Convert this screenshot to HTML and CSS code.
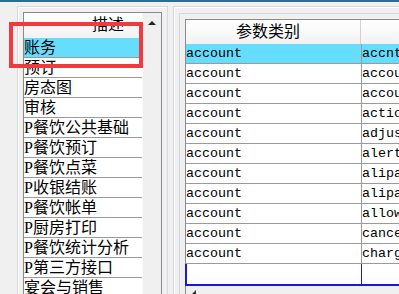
FILE: index.html
```html
<!DOCTYPE html>
<html>
<head>
<meta charset="utf-8">
<link rel="stylesheet" href="styles.css">
</head>
<body>
<div class="topbar"></div>
<div class="main">
  <div class="left-frame">
    <div class="left-grid">
      <div class="list">
        <div class="hdr">描述</div>
        <div class="row sel">账务</div>
        <div class="row">预订</div>
        <div class="row">房态图</div>
        <div class="row">审核</div>
        <div class="row">P餐饮公共基础</div>
        <div class="row">P餐饮预订</div>
        <div class="row">P餐饮点菜</div>
        <div class="row">P收银结账</div>
        <div class="row">P餐饮帐单</div>
        <div class="row">P厨房打印</div>
        <div class="row">P餐饮统计分析</div>
        <div class="row">P第三方接口</div>
        <div class="row">宴会与销售</div>
      </div>
      <div class="vscroll"><span class="up"></span></div>
    </div>
  </div>
  <div class="right-frame">
    <div class="right-inner">
      <div class="table">
        <div class="trow thead"><div class="c1">参数类别</div><div class="c2"></div></div>
        <div class="trow sel"><div class="c1">account</div><div class="c2">accnt</div></div>
        <div class="trow"><div class="c1">account</div><div class="c2">accou</div></div>
        <div class="trow"><div class="c1">account</div><div class="c2">accou</div></div>
        <div class="trow"><div class="c1">account</div><div class="c2">actio</div></div>
        <div class="trow"><div class="c1">account</div><div class="c2">adjus</div></div>
        <div class="trow"><div class="c1">account</div><div class="c2">alert</div></div>
        <div class="trow"><div class="c1">account</div><div class="c2">alipa</div></div>
        <div class="trow"><div class="c1">account</div><div class="c2">alipa</div></div>
        <div class="trow"><div class="c1">account</div><div class="c2">allow</div></div>
        <div class="trow"><div class="c1">account</div><div class="c2">cance</div></div>
        <div class="trow"><div class="c1">account</div><div class="c2">charg</div></div>
        <div class="trow edit"><div class="c1"></div><div class="c2"></div></div>
        <div class="hscroll"><span class="left"></span></div>
      </div>
    </div>
  </div>
</div>
<div class="annot"></div>
</body>
</html>
```

FILE: styles.css
```css
html, body {
  margin: 0;
  padding: 0;
}
body {
  width: 399px;
  height: 294px;
  overflow: hidden;
  background: #f0f0f0;
  position: relative;
  font-family: "Liberation Serif", "Noto Sans CJK SC", serif;
  color: #000;
}
.topbar {
  height: 2px;
  background: #2c6d8c;
}
.main {
  display: flex;
  align-items: flex-start;
  padding-top: 4px;
  padding-left: 17px;
  gap: 5px;
}
.left-frame {
  border: 1px solid #d5d9dd;
  box-shadow: inset 1px 1px 0 #fff;
  padding: 5px;
  height: 300px;
}
.left-grid {
  display: flex;
  border: 1px solid #8a8a8a;
  background: #fff;
  height: 300px;
}
.list {
  width: 118px;
}
.hdr {
  height: 25px;
  line-height: 24px;
  font-size: 16px;
  text-align: center;
  padding-left: 50px;
  box-sizing: border-box;
  background: linear-gradient(#ffffff, #f2f2f2);
}
.row {
  height: 19px;
  line-height: 19px;
  font-size: 16px;
  border-bottom: 1px solid #9a9a9a;
  white-space: nowrap;
  overflow: hidden;
}
.row.sel {
  background: #66ddfc;
}
.vscroll {
  width: 19px;
  background: #f0f0f0;
  border-left: 1px solid #fafafa;
  box-sizing: border-box;
  display: flex;
  justify-content: center;
  padding-top: 8px;
}
.up {
  width: 0;
  height: 0;
  border-left: 4px solid transparent;
  border-right: 4px solid transparent;
  border-bottom: 4px solid #222;
}
.right-frame {
  border: 1px solid #d5d9dd;
  box-shadow: inset 1px 1px 0 #fff;
  padding: 6px 0 0 5px;
  flex: 1;
  height: 300px;
}
.right-inner {
  border: 1px solid #d5d9dd;
  border-right: none;
  padding: 5px 0 0 5px;
  height: 300px;
}
.table {
  border: 1px solid #8a8a8a;
  border-right: none;
  background: #fff;
  width: 300px;
}
.trow {
  display: flex;
  height: 19px;
  line-height: 19px;
  border-bottom: 1px solid #9a9a9a;
  font-family: "Liberation Mono", monospace;
  font-size: 13.33px;
  white-space: nowrap;
}
.c1 {
  width: 175px;
  border-right: 1px solid #9a9a9a;
  overflow: hidden;
}
.c2 {
  flex: 1;
  overflow: hidden;
}
.thead {
  height: 24px;
  line-height: 24px;
  border-bottom: none;
  background: linear-gradient(#ffffff, #f2f2f2);
  font-family: "Liberation Serif", "Noto Sans CJK SC", serif;
  font-size: 16px;
}
.thead .c1 {
  text-align: center;
  padding-right: 10px;
  box-sizing: border-box;
  border-right-color: #d0d0d0;
}
.trow.sel {
  background: #66ddfc;
}
.trow.edit {
  height: 20px;
  border-bottom: 2px solid #1a1ad0;
  border-left: 2px solid #1a1ad0;
  margin-left: -1px;
}
.trow.edit .c1 {
  width: 174px;
  border-right-color: #1a1ad0;
}
.hscroll {
  height: 20px;
  background: #f0f0f0;
  padding: 4px 0 0 6px;
}
.left {
  display: block;
  width: 0;
  height: 0;
  border-top: 4px solid transparent;
  border-bottom: 4px solid transparent;
  border-right: 4px solid #333;
}
.annot {
  position: absolute;
  left: 9px;
  top: 22px;
  width: 134px;
  height: 46px;
  box-sizing: border-box;
  border: 4px solid #f23a3e;
}
```
